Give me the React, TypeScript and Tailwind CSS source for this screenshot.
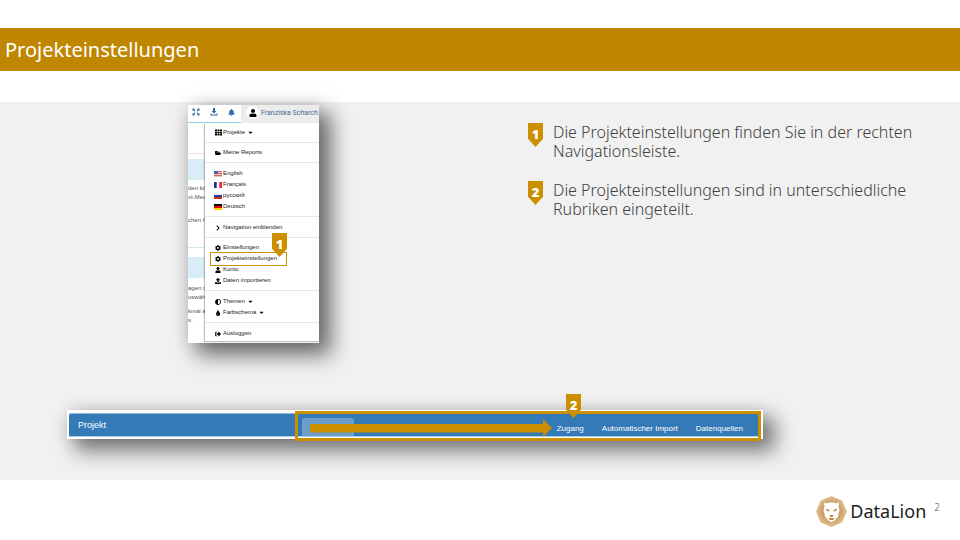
import React from "react";
import {
  FaAdjust,
  FaBell,
  FaCaretDown,
  FaChevronRight,
  FaCog,
  FaFolderOpen,
  FaSignOutAlt,
  FaTh,
  FaTint,
  FaUpload,
  FaUser,
} from "react-icons/fa";

function Marker({ n, className = "" }: { n: number; className?: string }) {
  return (
    <span
      className={`flex h-6 w-[15px] shrink-0 justify-center bg-[#cb8f00] pt-[3px] font-['Noto_Sans',sans-serif] text-[13px] leading-4 font-black text-white [clip-path:polygon(0_0,100%_0,100%_66%,50%_100%,0_66%)] ${className}`}
    >
      {n}
    </span>
  );
}

function ExpandIcon() {
  return (
    <svg viewBox="0 0 16 16" className="size-2" fill="currentColor" aria-hidden="true">
      <path d="M1 1h5L4.400 2.600 7 5.200 5.200 7 2.600 4.400 1 6ZM15 1v5l-1.600-1.600L10.800 7 9 5.200l2.600-2.600L10 1ZM1 15v-5l1.600 1.600L5.200 9 7 10.800l-2.600 2.600L6 15ZM15 15h-5l1.600-1.600L9 10.800 10.800 9l2.600 2.600L15 10Z" />
    </svg>
  );
}

function DownloadIcon() {
  return (
    <svg viewBox="0 0 16 16" className="size-2" fill="currentColor" aria-hidden="true">
      <path d="M6 0h4v6h3l-5 5-5-5h3ZM1 11h2v2h10v-2h2v4H1Z" />
    </svg>
  );
}

function Flag({ kind }: { kind: "us" | "fr" | "ru" | "de" }) {
  return (
    <svg viewBox="0 0 8 6" className="h-[6px] w-2" aria-hidden="true">
      {kind === "us" && (
        <>
          <rect width="8" height="6" fill="#e9c4c8" />
          <path d="M0 .5h8M0 2.5h8M0 4.5h8" stroke="#c8505c" strokeWidth=".8" />
          <rect width="4" height="3" fill="#5a5f93" />
        </>
      )}
      {kind === "fr" && (
        <>
          <rect width="8" height="6" fill="#fff" />
          <rect width="2.7" height="6" fill="#1c2f9c" />
          <rect x="5.3" width="2.7" height="6" fill="#ee2436" />
        </>
      )}
      {kind === "ru" && (
        <>
          <rect width="8" height="6" fill="#f1f1f1" />
          <rect y="2" width="8" height="2" fill="#1f3fa8" />
          <rect y="4" width="8" height="2" fill="#d52b1e" />
        </>
      )}
      {kind === "de" && (
        <>
          <rect width="8" height="2" fill="#000" />
          <rect y="2" width="8" height="2" fill="#e00000" />
          <rect y="4" width="8" height="2" fill="#ffce00" />
        </>
      )}
    </svg>
  );
}

function Item({ icon, label, caret, children }: { icon: React.ReactNode; label: string; caret?: boolean; children?: React.ReactNode }) {
  return (
    <li className="relative h-[11px]">
      <button type="button" className="flex h-[11px] items-center pl-2 text-[6px] leading-[11px] whitespace-nowrap text-[#222]">
        <span className="flex w-[10px] shrink-0 justify-center text-black">{icon}</span>
        {label}
        {caret && <FaCaretDown size={7} className="ml-[2px] text-black" />}
      </button>
      {children}
    </li>
  );
}

function Group({ className, children }: { className: string; children: React.ReactNode }) {
  return <ul className={`border-b border-[#e8e8e8] pb-1 last:border-b-0 ${className}`}>{children}</ul>;
}

function MenuShot() {
  return (
    <div className="relative h-[238px] w-[131px] bg-white font-['Liberation_Sans',Arial,sans-serif] shadow-[10px_10px_20px_2px_rgba(0,0,0,0.55),0_0_16px_rgba(0,0,0,0.1)]">
      <div className="flex h-full flex-col overflow-hidden">
        <div className="flex h-[18px] shrink-0 text-[#2b6ca8]">
          <div className="flex w-[53px] items-center justify-between border-b border-[#8fd0ee] px-1 pb-[3px]">
            <button type="button" aria-label="Vollbild"><ExpandIcon /></button>
            <button type="button" aria-label="Herunterladen"><DownloadIcon /></button>
            <button type="button" aria-label="Benachrichtigungen" className="pr-[2px]"><FaBell size={7} /></button>
          </div>
          <button type="button" className="flex flex-1 items-center overflow-hidden bg-[#ececec] pb-[3px] pl-[5px] text-[7px] leading-[14px] whitespace-nowrap text-[#4a6a94]">
            <span className="flex size-[13px] shrink-0 items-center justify-center rounded-full bg-white text-black">
              <FaUser size={8} />
            </span>
            <span className="ml-[2px] font-['Roboto',sans-serif]">Franziska Scharch</span>
            <FaCaretDown size={5} className="shrink-0" />
          </button>
        </div>
        <div className="mt-[30px] h-px shrink-0 bg-[#e8e8e8]" />
        <div className="mt-[5px] h-[21px] shrink-0 bg-[#d9edf7]" />
        <div className="pt-1 text-[6px] leading-[9px] whitespace-nowrap text-[#555]">
          <p>den kö</p>
          <p>xt-Med</p>
          <p className="pt-[14px]">chen f</p>
        </div>
        <div className="mt-[22px] h-px shrink-0 bg-[#cfe6f0]" />
        <div className="mt-[9px] h-[21px] shrink-0 bg-[#d9edf7]" />
        <div className="pt-[6px] text-[6px] leading-[9px] whitespace-nowrap text-[#555]">
          <p>agen n</p>
          <p>uswäh</p>
          <p className="pt-[5px]">kmal a</p>
          <p>s.</p>
        </div>
      </div>
      <nav aria-label="Benutzermenü" className="absolute top-[18px] right-0 left-[17px] h-[218px] bg-white shadow-[-1px_1px_1px_rgba(0,0,0,0.25)]">
        <Group className="pt-1">
          <Item icon={<FaTh size={7} />} label="Projekte" caret />
        </Group>
        <Group className="pt-1">
          <Item icon={<FaFolderOpen size={6} />} label="Meine Reports" />
        </Group>
        <Group className="pt-[5px]">
          <Item icon={<Flag kind="us" />} label="English" />
          <Item icon={<Flag kind="fr" />} label="Français" />
          <Item icon={<Flag kind="ru" />} label="русский" />
          <Item icon={<Flag kind="de" />} label="Deutsch" />
        </Group>
        <Group className="pt-[5px]">
          <Item icon={<FaChevronRight size={6} />} label="Navigation einblenden" />
        </Group>
        <Group className="pt-1">
          <Item icon={<FaCog size={6} />} label="Einstellungen" />
          <Item icon={<FaCog size={6} />} label="Projekteinstellungen">
            <span className="pointer-events-none absolute -top-px left-[5px] h-[14px] w-[77px] border border-[#cb8f00]" />
            <Marker n={1} className="absolute -top-5 left-[67px]" />
          </Item>
          <Item icon={<FaUser size={6} />} label="Konto" />
          <Item icon={<FaUpload size={6} />} label="Daten importieren" />
        </Group>
        <Group className="pt-[5px]">
          <Item icon={<FaAdjust size={6} />} label="Themen" caret />
          <Item icon={<FaTint size={6} />} label="Farbschema" caret />
        </Group>
        <Group className="pt-[5px]">
          <Item icon={<FaSignOutAlt size={6} />} label="Ausloggen" />
        </Group>
      </nav>
    </div>
  );
}

function ProjectBar() {
  return (
    <div className="relative mr-[197px] ml-[67px] bg-white px-[2px] pt-[3px] pb-[2px] font-['Liberation_Sans',Arial,sans-serif] shadow-[10px_10px_20px_2px_rgba(0,0,0,0.5),0_0_16px_rgba(0,0,0,0.1)]">
      <div className="flex h-6 rounded-t-[2px] border-t border-b border-t-[#8fb9da] border-b-[#a9cbe4] bg-[#337ab7] text-white">
        <h2 className="w-[233px] pl-[9px] text-[9px] leading-[22px]">Projekt</h2>
        <span className="mt-1 w-[52px] rounded-t-[2px] bg-[#6b9ecb]" />
        <nav className="flex flex-1 items-end justify-end gap-[18px] pr-[18px] text-[8px] leading-[15px]">
          <a href="#zugang">Zugang</a>
          <a href="#import">Automatischer Import</a>
          <a href="#datenquellen">Datenquellen</a>
        </nav>
      </div>
      <div className="pointer-events-none absolute top-px right-[2px] -bottom-[2px] left-[228px] border-[3px] border-[#cb8f00]" />
      <div className="absolute top-[9px] right-[211px] left-[243px] h-[18px] bg-[#cb8f00] [clip-path:polygon(0_28%,calc(100%_-_9px)_28%,calc(100%_-_9px)_0,100%_50%,calc(100%_-_9px)_100%,calc(100%_-_9px)_75%,0_75%)]" />
      <Marker n={2} className="absolute -top-4 left-[499px]" />
    </div>
  );
}

function LionMark() {
  return (
    <svg viewBox="0 0 62 62" className="size-[31px]" aria-hidden="true">
      <defs>
        <radialGradient id="gold" cx="50%" cy="50%" r="52%">
          <stop offset="0" stopColor="#b98232" />
          <stop offset=".55" stopColor="#cda063" />
          <stop offset="1" stopColor="#e6c69b" />
        </radialGradient>
      </defs>
      <path d="M31 0 52 9 62 31 52 53 31 62 9 53 0 31 9 9Z" fill="url(#gold)" />
      <path
        d="M16 15q3-3 6 0l4-2h10l4 2q3-3 6 0l-1 6 2 8-2 6-1 7-4 3-2 4-4 1-3 3-3-3-4-1-2-4-4-3-1-7-2-6 2-8Z"
        fill="#fff"
      />
      <path d="m20 25 7 3-1 3-5-2ZM42 25l-7 3 1 3 5-2ZM27 38h8l-2 4h-4ZM25 45l5-1h2l5 1-3 3h-6Z" fill="#b98232" />
    </svg>
  );
}

const steps = [
  "Die Projekteinstellungen finden Sie in der rechten Navigationsleiste.",
  "Die Projekteinstellungen sind in unterschiedliche Rubriken eingeteilt.",
];

export default function App() {
  return (
    <div className="min-h-screen bg-white pt-7 font-['Noto_Sans',sans-serif]">
      <header className="bg-[#bf8600] px-[5px] py-2">
        <h1 className="text-[20px] leading-[27px] text-white">Projekteinstellungen</h1>
      </header>
      <main className="mt-[31px] bg-[#f1f1f1] pb-[41px]">
        <div className="grid grid-cols-2">
          <div className="pt-[3px] pl-[188px]">
            <MenuShot />
          </div>
          <ol className="flex flex-col gap-5 pt-[21px] pr-6 pl-12">
            {steps.map((text, i) => (
              <li key={text} className="flex gap-[10px]">
                <Marker n={i + 1} />
                <p className="text-[16px] leading-[19px] font-light text-[#404040]">{text}</p>
              </li>
            ))}
          </ol>
        </div>
        <div className="pt-[67px]">
          <ProjectBar />
        </div>
      </main>
      <footer className="flex justify-end gap-2 pt-4 pr-5">
        <div className="flex items-center gap-[3px]">
          <LionMark />
          <span className="text-[18px] leading-[31px] text-[#1d1d1b]">DataLion</span>
        </div>
        <span className="pt-[3px] text-[10px] leading-4 font-light text-[#555]">2</span>
      </footer>
    </div>
  );
}
